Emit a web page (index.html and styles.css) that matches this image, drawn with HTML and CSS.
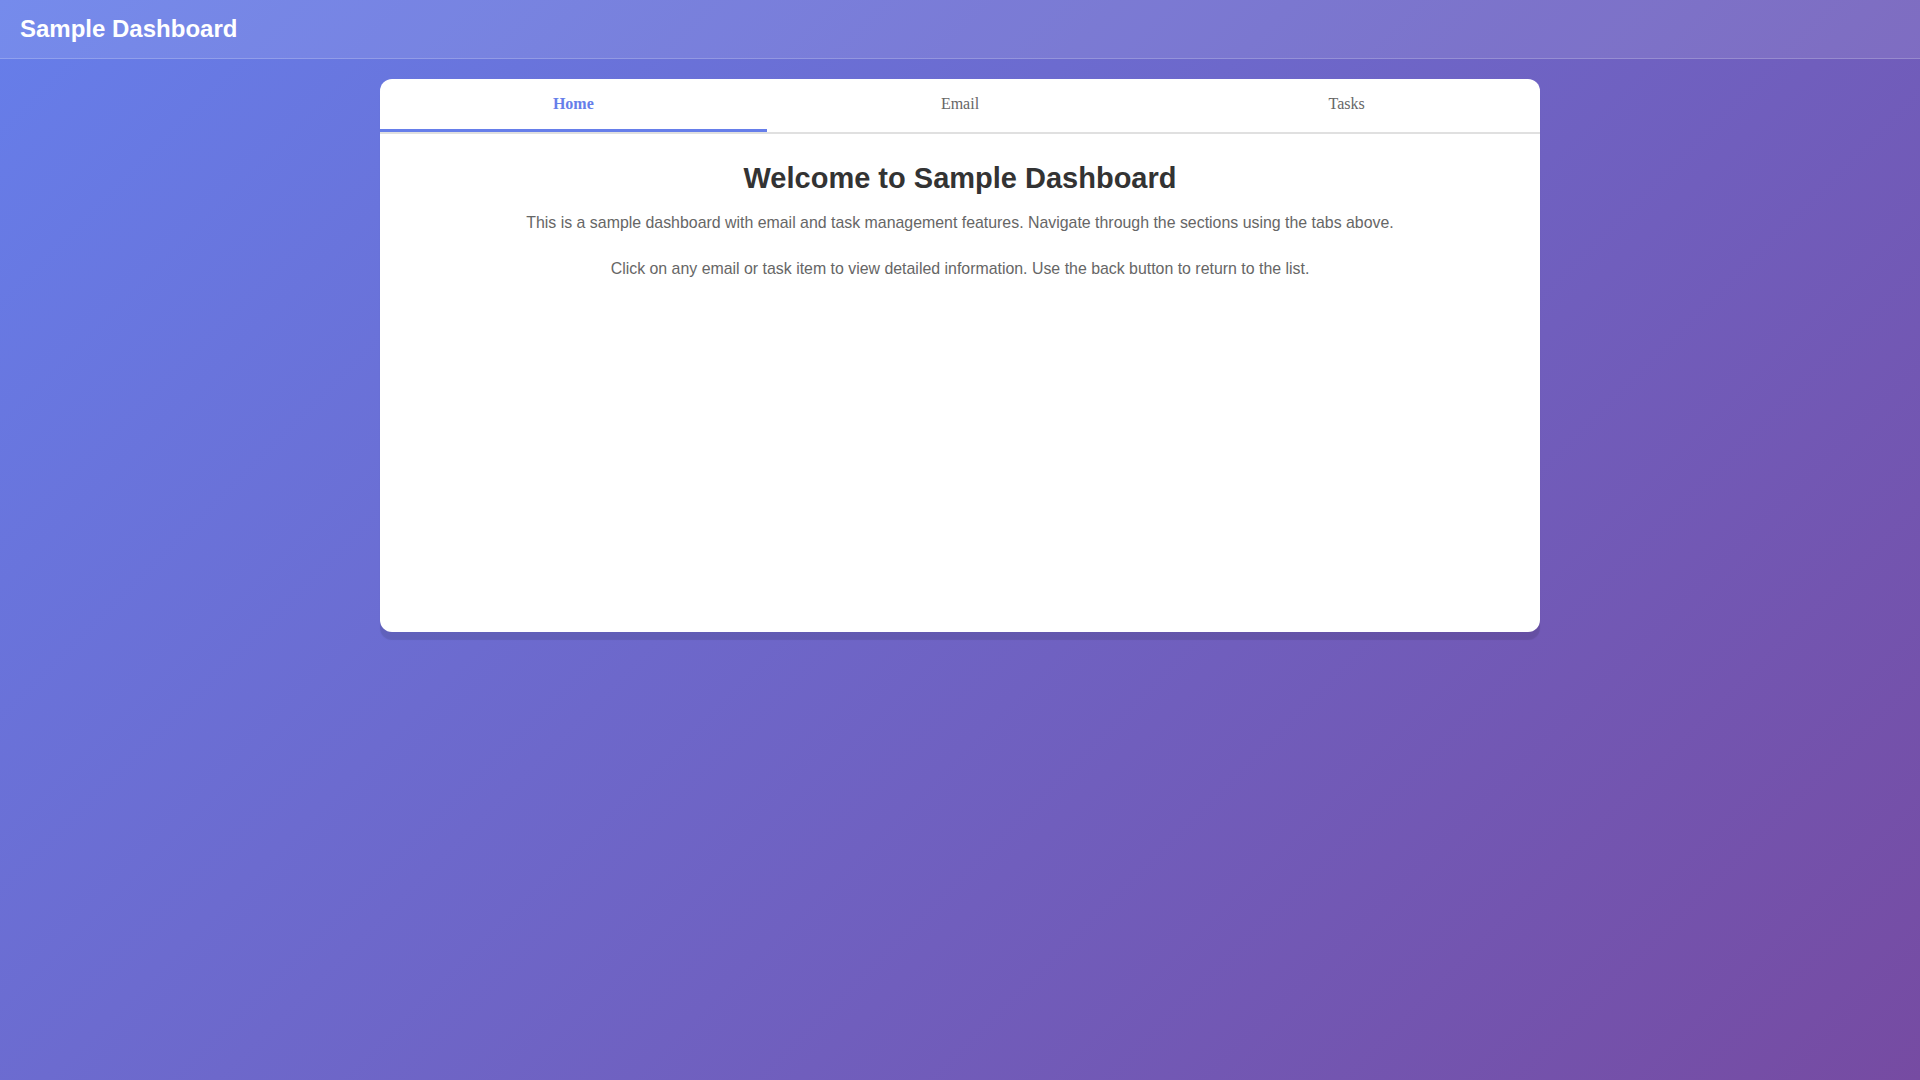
FILE: index.html
```html
<!DOCTYPE html>
<html lang="en">
<head>
<meta charset="utf-8">
<title>Sample Dashboard</title>
<link rel="stylesheet" href="styles.css">
</head>
<body>
<header class="topbar">
  <h1 class="brand">Sample Dashboard</h1>
</header>
<main class="card">
  <nav class="tabs">
    <button class="tab active">Home</button>
    <button class="tab">Email</button>
    <button class="tab">Tasks</button>
  </nav>
  <section class="content">
    <h2 class="title">Welcome to Sample Dashboard</h2>
    <p class="text">This is a sample dashboard with email and task management features. Navigate through the sections using the tabs above.</p>
    <p class="text">Click on any email or task item to view detailed information. Use the back button to return to the list.</p>
  </section>
</main>
</body>
</html>
```

FILE: styles.css
```css
html, body {
  margin: 0;
  padding: 0;
}
body {
  min-height: 100vh;
  background: linear-gradient(135deg, #667eea 0%, #764ba2 100%);
  font-family: "Liberation Sans", Arial, sans-serif;
  overflow: hidden;
}
.topbar {
  background: rgba(255, 255, 255, 0.1);
  border-bottom: 1px solid rgba(255, 255, 255, 0.2);
  padding: 15px 20px;
}
.brand {
  margin: 0;
  font-size: 24px;
  line-height: 28px;
  font-weight: bold;
  color: #fff;
}
.card {
  display: block;
  width: 1160px;
  margin: 20px auto 0;
  background: #fff;
  border-radius: 12px;
  box-shadow: 0 8px 1px rgba(0, 0, 0, 0.1);
  overflow: hidden;
}
.tabs {
  display: flex;
  border-bottom: 2px solid #e0e0e0;
}
.tab {
  flex: 1;
  background: none;
  border: none;
  border-bottom: 3px solid transparent;
  padding: 16px 0;
  margin: 0;
  font-family: "Liberation Serif", "Times New Roman", serif;
  font-size: 16px;
  line-height: 18px;
  color: #666;
  cursor: pointer;
}
.tab.active {
  color: #667eea;
  font-weight: bold;
  border-bottom-color: #667eea;
}
.content {
  box-sizing: border-box;
  min-height: 498px;
  padding: 28px 30px;
  text-align: center;
}
.title {
  margin: 0 0 15px;
  font-size: 29px;
  line-height: 33px;
  font-weight: bold;
  color: #333;
}
.text {
  margin: 0 0 20px;
  font-size: 15.9px;
  line-height: 25.6px;
  color: #666;
}
```
